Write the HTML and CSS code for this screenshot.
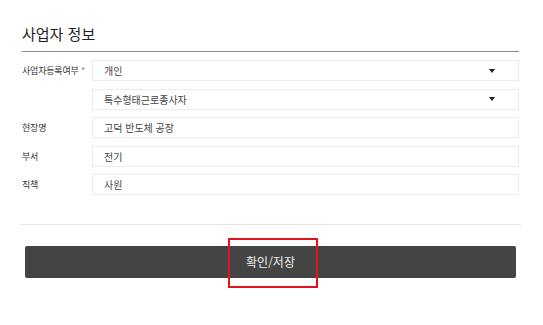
FILE: index.html
```html
<!DOCTYPE html>
<html lang="ko">
<head>
	<meta charset="utf-8" />
	<title>사업자 정보</title>
	<link rel="stylesheet" href="styles.css">
</head>
<body>
	<div id="wrapper">
		<h2 class="title">사업자 정보</h2>
		<div class="form">
			<div class="row">
				<label class="label">사업자등록여부 <span class="req">*</span></label>
				<div class="field select"><span>개인</span><i class="caret"></i></div>
			</div>
			<div class="row">
				<label class="label"></label>
				<div class="field select"><span>특수형태근로종사자</span><i class="caret"></i></div>
			</div>
			<div class="row">
				<label class="label">현장명</label>
				<div class="field"><span>고덕 반도체 공장</span></div>
			</div>
			<div class="row">
				<label class="label">부서</label>
				<div class="field"><span>전기</span></div>
			</div>
			<div class="row">
				<label class="label">직책</label>
				<div class="field"><span>사원</span></div>
			</div>
		</div>
		<hr class="divider">
		<div class="actions">
			<button class="btn-save">확인/저장</button>
			<div class="highlight"></div>
		</div>
	</div>
</body>
</html>
```

FILE: styles.css
```css
body {margin:0; padding:0; font-family:"Noto Sans CJK KR","Noto Sans",sans-serif; color:#333; background:#fff;}

#wrapper {padding:0 24px 40px 22px;}

.title {margin:0; padding:24px 0 7px; font-size:15px; line-height:20px; font-weight:normal; color:#222; border-bottom:1px solid #8a8a8a;}

.form {display:flex; flex-direction:column; gap:7.5px; margin-top:8px;}
.row {display:flex; align-items:center; height:21px;}
.label {width:70px; flex:none; font-size:9px; color:#333; letter-spacing:-0.2px;}
.req {color:#888;}

.field {flex:1; display:flex; align-items:center; justify-content:space-between; height:21px; box-sizing:border-box; padding:0 23px 0 11px; border:1px solid #ececec; font-size:10px; color:#444;}
.caret {width:0; height:0; border-left:3.5px solid transparent; border-right:3.5px solid transparent; border-top:4px solid #222;}

.divider {margin:29px -2px 0; border:0; border-top:1px solid #e6e6e6;}

.actions {position:relative; margin:21px 3px 0; padding-bottom:12px;}
.btn-save {display:block; width:100%; height:32px; border:0; border-radius:2px; background:#444; color:#eee; font-family:inherit; font-size:12px; line-height:32px; padding:0;}

.highlight {position:absolute; z-index:2; left:203px; top:-8px; width:86px; height:46px; border:2px solid #e0141a;}
```
